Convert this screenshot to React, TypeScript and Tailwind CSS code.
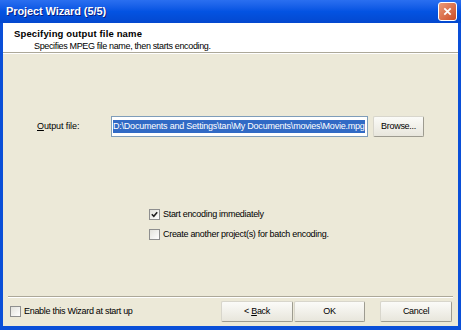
import React from "react"

function Check({ checked }: { checked?: boolean }) {
  return (
    <span className="flex h-[11px] w-[11px] shrink-0 items-center justify-center border border-[#8e8f8f] bg-gradient-to-br from-[#e2e2dc] to-white">
      {checked && (
        <svg width="7" height="7" viewBox="0 0 7 7">
          <path d="M0.8 3.2 L2.8 5.2 L6.2 1.2" fill="none" stroke="#222" strokeWidth="1.6" />
        </svg>
      )}
    </span>
  )
}

function Btn({ children, w }: { children: React.ReactNode; w: string }) {
  return (
    <button
      className={`${w} h-[21px] rounded-[2px] border border-[#9d9b90] border-l-[#d8d6cc] border-t-[#d8d6cc] bg-gradient-to-b from-[#fbfbf8] to-[#e8e6dc] text-black`}
    >
      {children}
    </button>
  )
}

export default function App() {
  return (
    <div
      className="flex h-[330px] w-[461px] flex-col overflow-hidden bg-[#0a4fd8] text-[9px] tracking-[-0.3px] text-black"
      style={{ fontFamily: "'Liberation Sans', Arial, sans-serif" }}
    >
      {/* title bar */}
      <div className="flex h-[23px] shrink-0 items-center justify-between bg-gradient-to-b from-[#2a6ff0] via-[#0353e2] to-[#0348cf] pl-[6px] pr-[4px]">
        <span className="text-[11px] font-bold tracking-[-0.1px] text-white [text-shadow:1px_1px_#0a1e80]">Project Wizard (5/5)</span>
        <span className="flex h-[19px] w-[19px] items-center justify-center rounded-[3px] border border-white bg-gradient-to-br from-[#e99a78] to-[#cc4a22]">
          <svg width="9" height="9" viewBox="0 0 9 9">
            <path d="M1.3 1.3 L7.7 7.7 M7.7 1.3 L1.3 7.7" stroke="white" strokeWidth="1.8" />
          </svg>
        </span>
      </div>

      {/* client area */}
      <div className="mx-[3px] mb-[4px] flex flex-1 flex-col bg-[#ece9d8]">
        <div className="flex h-[30px] flex-col border-b border-[#aca899] bg-white pl-[11px] pt-[4px]">
          <span className="text-[9.5px] font-bold leading-[13px] tracking-[0.15px]">Specifying output file name</span>
          <span className="ml-[20px] leading-[13px] tracking-[-0.35px]">Specifies MPEG file name, then starts encoding.</span>
        </div>
        <div className="border-t border-white" />

        <div className="flex items-center pl-[34px] pt-[62px]">
          <span className="w-[74px] tracking-[-0.1px]"><u>O</u>utput file:</span>
          <div className="flex h-[21px] w-[257px] items-center overflow-hidden border border-[#7f9db9] bg-white px-[1px]">
            <span className="whitespace-nowrap bg-[#316ac5] leading-[13px] tracking-[-0.22px] text-white">D:\Documents and Settings\tan\My Documents\movies\Movie.mpg</span>
          </div>
          <div className="ml-[5px]">
            <Btn w="w-[51px]">Browse...</Btn>
          </div>
        </div>

        <div className="flex flex-col gap-[7px] pl-[146px] pt-[71px]">
          <label className="flex items-center gap-[3px] leading-[13px]"><Check checked />Start encoding immediately</label>
          <label className="flex items-center gap-[3px] leading-[13px]"><Check />Create another project(s) for batch encoding.</label>
        </div>

        <div className="mx-[5px] mt-auto border-t border-[#aca899]" />
        <div className="mx-[5px] border-t border-white" />
        <div className="flex items-center pb-[4px] pl-[7px] pr-[6px] pt-[3px]">
          <label className="flex items-center gap-[3px]"><Check />Enable this Wizard at start up</label>
          <div className="ml-auto flex gap-[1px]">
            <Btn w="w-[72px]">&lt; <u>B</u>ack</Btn>
            <Btn w="w-[71px]">OK</Btn>
          </div>
          <div className="ml-[15px]">
            <Btn w="w-[72px]">Cancel</Btn>
          </div>
        </div>
      </div>
    </div>
  )
}
